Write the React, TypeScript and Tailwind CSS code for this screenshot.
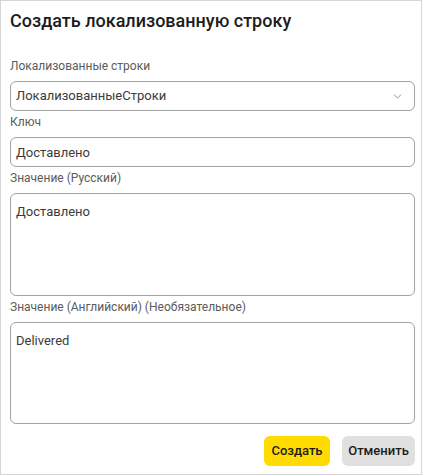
import { ChevronDown } from "lucide-react";

const labelCls = "block h-5 text-[12px] leading-5 text-[#5b5b5b] mb-[5px]";
const boxCls =
  "w-full rounded-[6px] border border-[#a3a3a3] bg-white px-[5px] text-[13px] text-[#3b3b3b] outline-none";

export default function App() {
  return (
    <div
      className="w-[422px] h-[475px] border border-[#d6d6d6] bg-white pl-[9px] pr-[6px] pt-[6px] flex flex-col"
      style={{ fontFamily: "Roboto, 'Noto Sans', sans-serif" }}
    >
      <h1 className="text-[18px] leading-7 font-medium text-[#1c1c1c]">
        Создать локализованную строку
      </h1>

      <div className="mt-[21px] flex flex-col gap-px">
        <div>
          <label className={labelCls}>Локализованные строки</label>
          <div className={`${boxCls} h-[30px] flex items-center justify-between pr-[10px]`}>
            <span>ЛокализованныеСтроки</span>
            <ChevronDown size={13} strokeWidth={1.5} className="text-[#777]" />
          </div>
        </div>

        <div>
          <label className={labelCls}>Ключ</label>
          <input className={`${boxCls} h-[30px]`} defaultValue="Доставлено" />
        </div>

        <div>
          <label className={labelCls}>Значение (Русский)</label>
          <textarea
            className={`${boxCls} h-[103px] resize-none pt-[8px] leading-5 block`}
            defaultValue="Доставлено"
          />
        </div>

        <div>
          <label className={labelCls}>Значение (Английский) (Необязательное)</label>
          <textarea
            className={`${boxCls} h-[102px] resize-none pt-[8px] leading-5 block`}
            defaultValue="Delivered"
          />
        </div>
      </div>

      <div className="mt-3 flex justify-end gap-3">
        <button className="h-[30px] w-[66px] rounded-[6px] bg-[#ffdb00] text-[13px] font-medium text-[#1c1c1c]">
          Создать
        </button>
        <button className="h-[30px] w-[73px] rounded-[6px] bg-[#e0e0e0] text-[13px] font-medium text-[#1c1c1c]">
          Отменить
        </button>
      </div>
    </div>
  );
}
